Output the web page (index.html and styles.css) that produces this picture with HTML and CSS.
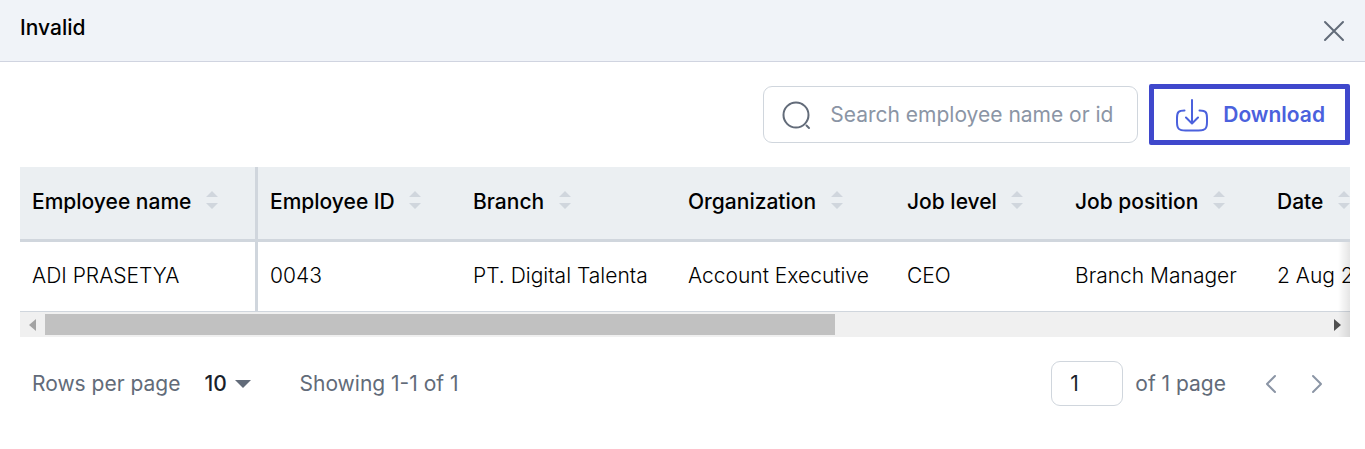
FILE: index.html
```html
<!DOCTYPE html>
<html lang="en">
<head>
    <meta charset="UTF-8" />
    <meta name="viewport" content="width=device-width, initial-scale=1.0" />
    <title>Invalid</title>
    <link rel="stylesheet" href="styles.css">
</head>
<body>
  <header class="modal-header">
    <h2>Invalid</h2>
    <button type="button" class="btn-close" aria-label="Close">
      <svg width="22" height="22" viewBox="0 0 22 22"><path d="M2 2l18 18M20 2L2 20" /></svg>
    </button>
  </header>

  <main class="modal-body">
    <div class="toolbar">
      <label class="search">
        <svg width="30" height="30" viewBox="0 0 30 30"><circle cx="14" cy="15" r="12.5" /><path d="M24.500 25.500l2.500 2.500" /></svg>
        <input type="text" placeholder="Search employee name or id" aria-label="Search employee" />
      </label>
      <button type="button" class="btn-download">
        <svg width="34" height="34" viewBox="0 0 34 34"><path d="M17 2v23M11 19.500l6 6 6-6M9.500 12.500C3.500 12.500 2 14 2 20v4c0 7 2 8.500 8.500 8.500h13c6.500 0 8.500-1.500 8.500-8.500v-4c0-6-1.500-7.500-7.500-7.500" /></svg>
        Download
      </button>
    </div>

    <div class="table-wrap">
      <div class="table-scroll">
        <table>
          <colgroup>
            <col class="col-name">
            <col class="col-id">
            <col class="col-branch">
            <col class="col-org">
            <col class="col-level">
            <col class="col-position">
            <col class="col-date">
          </colgroup>
          <thead>
            <tr>
              <th>Employee name <svg class="sort" width="12" height="18" viewBox="0 0 12 18"><path d="M6 0l6 6H0zM6 18l6-6H0z" /></svg></th>
              <th>Employee ID <svg class="sort" width="12" height="18" viewBox="0 0 12 18"><path d="M6 0l6 6H0zM6 18l6-6H0z" /></svg></th>
              <th>Branch <svg class="sort" width="12" height="18" viewBox="0 0 12 18"><path d="M6 0l6 6H0zM6 18l6-6H0z" /></svg></th>
              <th>Organization <svg class="sort" width="12" height="18" viewBox="0 0 12 18"><path d="M6 0l6 6H0zM6 18l6-6H0z" /></svg></th>
              <th>Job level <svg class="sort" width="12" height="18" viewBox="0 0 12 18"><path d="M6 0l6 6H0zM6 18l6-6H0z" /></svg></th>
              <th>Job position <svg class="sort" width="12" height="18" viewBox="0 0 12 18"><path d="M6 0l6 6H0zM6 18l6-6H0z" /></svg></th>
              <th>Date <svg class="sort" width="12" height="18" viewBox="0 0 12 18"><path d="M6 0l6 6H0zM6 18l6-6H0z" /></svg></th>
            </tr>
          </thead>
          <tbody>
            <tr>
              <td>ADI PRASETYA</td>
              <td>0043</td>
              <td>PT. Digital Talenta</td>
              <td>Account Executive</td>
              <td>CEO</td>
              <td>Branch Manager</td>
              <td>2 Aug 2</td>
            </tr>
          </tbody>
        </table>
      </div>
      <div class="scrollbar">
        <button type="button" aria-label="Scroll left">
          <svg width="7" height="12" viewBox="0 0 7 12"><path fill="#a3a3a3" d="M7 0v12L0 6z" /></svg>
        </button>
        <div class="track"><div class="thumb"></div></div>
        <button type="button" aria-label="Scroll right">
          <svg width="7" height="12" viewBox="0 0 7 12"><path fill="#505050" d="M0 0v12l7-6z" /></svg>
        </button>
      </div>
    </div>

    <div class="pagination">
      <label for="rows">Rows per page</label>
      <div class="select">
        <select id="rows">
          <option>10</option>
          <option>25</option>
          <option>50</option>
        </select>
        <svg width="16" height="8" viewBox="0 0 16 8"><path d="M0 0h16L8 8z" /></svg>
      </div>
      <span>Showing 1-1 of 1</span>
      <div class="pages">
        <input type="text" id="page" value="1" />
        <label for="page">of 1 page</label>
        <button type="button" class="btn-page" aria-label="Previous page">
          <svg width="12" height="20" viewBox="0 0 12 20"><path d="M10 2l-8 8 8 8" /></svg>
        </button>
        <button type="button" class="btn-page" aria-label="Next page">
          <svg width="12" height="20" viewBox="0 0 12 20"><path d="M2 2l8 8-8 8" /></svg>
        </button>
      </div>
    </div>
  </main>
</body>
</html>
```
FILE: styles.css
```css
* {
  box-sizing: border-box;
}

body {
  margin: 0;
  background: #fff;
  color: #000;
  font-family: Inter, "Liberation Sans", sans-serif;
  font-size: 21px;
  line-height: 28px;
}

button,
input,
select {
  font: inherit;
}

button {
  display: flex;
  align-items: center;
  justify-content: center;
  padding: 0;
  border: none;
  background: none;
  cursor: pointer;
}

svg {
  flex: none;
  fill: none;
  stroke-linecap: round;
  stroke-linejoin: round;
}

.modal-header {
  display: flex;
  justify-content: space-between;
  height: 62px;
  padding: 14px 20px;
  background: #f0f3f8;
  border-bottom: 1px solid #d0d4e0;
}

h2 {
  margin: 0;
  font-size: 21px;
  font-weight: 500;
}

.btn-close {
  height: 34px;
}

.btn-close svg {
  stroke: #626b79;
  stroke-width: 2;
}

.modal-body {
  padding: 22px 15px 0 20px;
}

.toolbar {
  display: flex;
  align-items: center;
  justify-content: flex-end;
  gap: 11px;
}

.search {
  display: flex;
  align-items: center;
  gap: 18px;
  width: 375px;
  height: 57px;
  padding: 0 18px;
  border: 1px solid #d0d6dd;
  border-radius: 9px;
}

.search svg {
  stroke: #626b79;
  stroke-width: 2;
}

.search input {
  flex: 1;
  min-width: 0;
  padding: 0;
  border: none;
  outline: none;
  background: none;
}

.search input::placeholder {
  color: #8b95a5;
  opacity: 1;
}

.btn-download {
  gap: 14px;
  height: 61px;
  padding: 0 20px 0 21px;
  border: 5px solid #3f48cc;
  border-radius: 2px;
  color: #4b61dd;
  font-weight: 600;
}

.btn-download svg {
  stroke: #4b61dd;
  stroke-width: 2;
}

.table-wrap {
  position: relative;
  margin-top: 22px;
}

.table-wrap::after {
  content: "";
  position: absolute;
  top: 75px;
  right: 0;
  bottom: 0;
  width: 12px;
  background: linear-gradient(to right, rgba(0, 0, 0, 0), rgba(0, 0, 0, 0.1));
  pointer-events: none;
}

.table-scroll {
  overflow: hidden;
}

table {
  width: 1425px;
  table-layout: fixed;
  border-collapse: separate;
  border-spacing: 0;
}

.col-name { width: 238px; }
.col-id { width: 203px; }
.col-branch { width: 215px; }
.col-org { width: 219px; }
.col-level { width: 168px; }
.col-position { width: 202px; }
.col-date { width: 180px; }

th,
td {
  padding: 0 12px 2px;
  text-align: left;
  white-space: nowrap;
}

th {
  height: 75px;
  background: #ebeff2;
  border-bottom: 3px solid #d0d6dd;
  font-weight: 500;
}

td {
  height: 70px;
  border-bottom: 1px solid #d0d6dd;
  font-weight: 300;
}

th:first-child,
td:first-child {
  border-right: 3px solid #d0d6dd;
}

.sort {
  margin-left: 9px;
  fill: #d0d6dd;
}

.scrollbar {
  display: flex;
  height: 25px;
  background: #f0f0f0;
}

.scrollbar button {
  width: 25px;
}

.track {
  flex: 1;
  padding: 2px 0;
}

.thumb {
  width: 61.7%;
  height: 21px;
  background: #c1c1c1;
}

.pagination {
  display: flex;
  align-items: center;
  margin-top: 24px;
  padding: 0 10px 0 12px;
  line-height: 26px;
  color: #626b79;
}

.select {
  display: flex;
  align-items: center;
  margin: 0 49px 0 24px;
}

.select select {
  width: 46px;
  margin-right: -16px;
  padding: 0;
  appearance: none;
  border: none;
  background: none;
  color: #1a1f2b;
  font-weight: 500;
}

.select svg {
  fill: #626b79;
  pointer-events: none;
}

.pages {
  display: flex;
  align-items: center;
  margin-left: auto;
}

.pages input {
  width: 72px;
  height: 45px;
  margin-right: 12px;
  padding: 0 18px;
  border: 1px solid #d0d6dd;
  border-radius: 9px;
  color: #1a1f2b;
}

.pages label {
  margin-right: 22px;
}

.btn-page {
  width: 46px;
  height: 44px;
}

.btn-page svg {
  stroke: #8b95a5;
  stroke-width: 2;
}
```
